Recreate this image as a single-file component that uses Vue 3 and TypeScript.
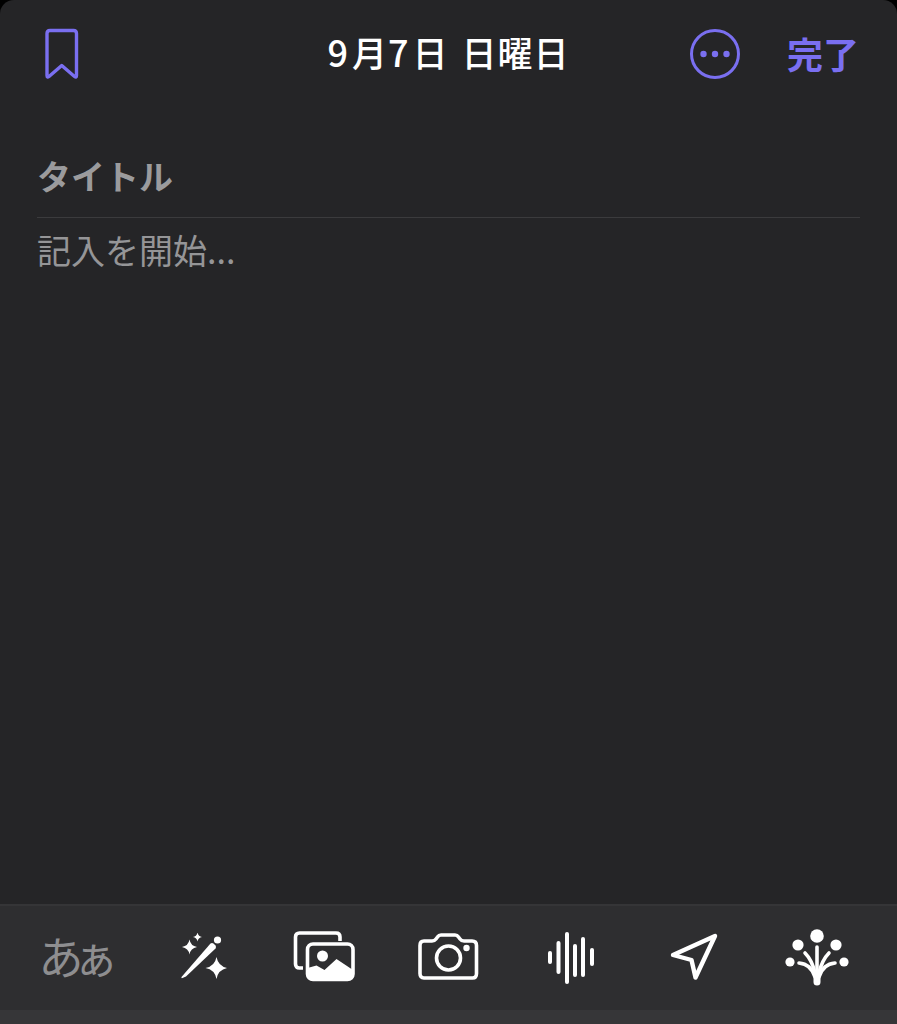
<script setup lang="ts">
const purple: string = '#7a6ff0'
</script>

<template>
  <div class="screen">
    <header class="nav">
      <div class="nav-left">
        <svg class="bookmark" width="34" height="52" viewBox="0 0 34 52" fill="none">
          <path d="M2 47.5V5.5Q2 2.5 5 2.5H28.5Q31.5 2.5 31.5 5.5V47.5Q31.5 50 29.5 48.5L16.75 37.5L4 48.5Q2 50 2 47.5Z" :stroke="purple" stroke-width="3.4" stroke-linejoin="round" />
        </svg>
      </div>
      <div class="date"><span class="num">9</span>月<span class="num">7</span>日 日曜日</div>
      <div class="nav-right">
        <svg class="more" width="52" height="52" viewBox="0 0 52 52" fill="none">
          <circle cx="26" cy="26" r="23.5" :stroke="purple" stroke-width="3" />
          <circle cx="14.5" cy="26" r="3.2" :fill="purple" />
          <circle cx="26" cy="26" r="3.2" :fill="purple" />
          <circle cx="37.5" cy="26" r="3.2" :fill="purple" />
        </svg>
        <span class="done">完了</span>
      </div>
    </header>

    <main class="editor">
      <div class="entry-title">タイトル</div>
      <div class="rule"></div>
      <div class="entry-body">記入を開始...</div>
    </main>

    <footer class="toolbar">
      <div class="tool tool-text"><span class="aa">あぁ</span></div>
      <div class="tool">
        <svg width="50" height="50" viewBox="0 0 50 50" fill="#fff">
          <path d="M4.5 44L33.5 10.5Q35 9.5 36.5 10.5L38.5 12.5Q39.5 14 38.5 15.5L9 43.5L5.5 45Q4 45.5 4.5 44Z" />
          <circle cx="40.5" cy="7" r="3.6" />
          <path d="M12.5 6.5Q13.6 12.9 20 14Q13.6 15.1 12.5 21.5Q11.4 15.1 5 14Q11.4 12.9 12.5 6.5Z" />
          <path d="M20.5 -0.5Q21.2 3.3 25 4Q21.2 4.7 20.5 8.5Q19.8 4.7 16 4Q19.8 3.3 20.5 -0.5Z" />
          <path d="M39.5 24Q41.2 33.3 50.5 35Q41.2 36.7 39.5 46Q37.8 36.7 28.5 35Q37.8 33.3 39.5 24Z" />
        </svg>
      </div>
      <div class="tool">
        <svg width="64" height="54" viewBox="0 0 64 54" fill="none">
          <path d="M10 37H6.5Q2.5 37 2.5 33V6Q2.5 2 6.5 2H43Q47 2 47 6V10" stroke="#fff" stroke-width="3.6" />
          <rect x="14.5" y="13" width="45.5" height="35.5" rx="5.5" stroke="#fff" stroke-width="3.6" />
          <circle cx="29.5" cy="25" r="5.5" fill="#fff" />
          <path d="M14.5 37L23.5 34.5L31.5 39L43.5 28L60 39V44Q60 49 55 49H19.5Q14.5 49 14.5 44Z" fill="#fff" />
        </svg>
      </div>
      <div class="tool">
        <svg width="62" height="50" viewBox="0 0 62 50" fill="none" stroke="#fff" stroke-width="3.6" stroke-linejoin="round">
          <path d="M7 8H15Q17.5 8 19 6L20.5 4Q21.8 2 24 2H38Q40.2 2 41.5 4L43 6Q44.5 8 47 8H55Q59.5 8 59.5 12.5V40.5Q59.5 45 55.5 45H7Q3 45 3 40.5V12.5Q3 8 7 8Z" />
          <circle cx="31.5" cy="25" r="12" />
          <circle cx="49.5" cy="15" r="3.2" fill="#fff" stroke="none" />
        </svg>
      </div>
      <div class="tool">
        <svg width="48" height="54" viewBox="0 0 48 54" fill="none" stroke="#fff" stroke-width="4" stroke-linecap="round">
          <path d="M3 22V31" />
          <path d="M11.5 12V41" />
          <path d="M20 3V51" />
          <path d="M28 15V44" />
          <path d="M36 8V44" />
          <path d="M45 19V33" />
        </svg>
      </div>
      <div class="tool">
        <svg width="50" height="50" viewBox="0 0 50 50" fill="none">
          <path d="M4 22L46 3L26.5 44.5L22.5 27Z" stroke="#fff" stroke-width="4.4" stroke-linejoin="round" />
        </svg>
      </div>
      <div class="tool">
        <svg width="66" height="58" viewBox="0 0 66 58" fill="#fff">
          <circle cx="33" cy="7" r="6.8" />
          <circle cx="14" cy="16" r="5.6" />
          <circle cx="52" cy="16" r="5.6" />
          <circle cx="6" cy="33" r="4.6" />
          <circle cx="60" cy="33" r="4.6" />
          <g fill="none" stroke="#fff" stroke-width="3.6" stroke-linecap="round">
            <path d="M33 18V52" />
            <path d="M21 24Q28 31 31 44" />
            <path d="M45 24Q38 31 35 44" />
            <path d="M15 34Q27 35 31 48" />
            <path d="M51 34Q39 35 35 48" />
          </g>
          <path d="M29.5 42H36.5V53Q36.5 56.5 33 56.5Q29.5 56.5 29.5 53Z" />
        </svg>
      </div>
    </footer>
    <div class="strip"></div>
  </div>
</template>

<style>
html, body {
  margin: 0;
  background: #000;
}
</style>

<style scoped>
.screen {
  width: 897px;
  height: 1024px;
  display: flex;
  flex-direction: column;
  background: #252527;
  border-radius: 14px 14px 0 0;
  overflow: hidden;
  font-family: "Noto Sans CJK JP", "Liberation Sans", sans-serif;
}
.nav {
  height: 106px;
  flex: none;
  padding: 0 38px;
  display: grid;
  grid-template-columns: 1fr auto 1fr;
  align-items: center;
  box-sizing: border-box;
}
.nav-left {
  padding-left: 7px;
  display: flex;
}
.bookmark {
  display: block;
  margin-top: 2px;
}
.date {
  color: #fff;
  font-size: 35px;
  font-weight: 500;
  line-height: 40px;
  letter-spacing: 1px;
  word-spacing: 4px;
  white-space: nowrap;
  margin-top: -4px;
}
.num {
  font-size: 36px;
  letter-spacing: 4px;
}
.nav-right {
  display: flex;
  justify-content: flex-end;
  align-items: center;
  gap: 46px;
}
.more {
  display: block;
  margin-top: 1px;
}
.done {
  color: #7a6ff0;
  font-size: 36px;
  font-weight: 700;
  line-height: 40px;
}
.editor {
  flex: 1;
  padding: 0 37px;
  min-height: 0;
}
.entry-title {
  margin-top: 49px;
  color: #9b9b9d;
  font-size: 34px;
  font-weight: 700;
  line-height: 42px;
}
.rule {
  height: 1px;
  margin-top: 20px;
  background: #3b3b3d;
}
.entry-body {
  margin-top: 11px;
  color: #959597;
  font-size: 34px;
  line-height: 42px;
}
.toolbar {
  height: 106px;
  flex: none;
  box-sizing: border-box;
  border-top: 2px solid #353537;
  background: #2e2e30;
  padding: 0 17px;
  display: grid;
  grid-template-columns: repeat(7, 123px);
  align-items: center;
}
.tool {
  display: flex;
  align-items: center;
  justify-content: center;
}
.tool svg {
  display: block;
}
.tool-text {
  color: #8e8e90;
}
.aa {
  font-size: 45px;
  line-height: 50px;
  letter-spacing: -10px;
  padding-right: 10px;
  white-space: nowrap;
  margin-top: -4px;
}
.strip {
  height: 14px;
  flex: none;
  background: #363638;
}
</style>
